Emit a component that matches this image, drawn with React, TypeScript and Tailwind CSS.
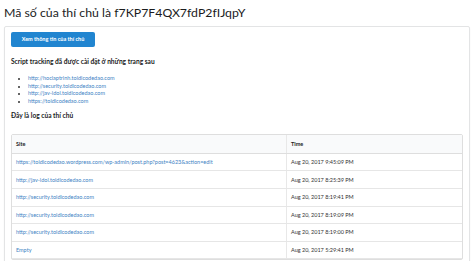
import React from "react";

const sites = [
  "http://hoclaptrinh.toidicodedao.com",
  "http://security.toidicodedao.com",
  "http://jav-idol.toidicodedao.com",
  "https://toidicodedao.com",
];

const logs = [
  { site: "https://toidicodedao.wordpress.com/wp-admin/post.php?post=4623&action=edit", time: "Aug 20, 2017 9:45:09 PM" },
  { site: "http://jav-idol.toidicodedao.com", time: "Aug 20, 2017 8:25:39 PM" },
  { site: "http://security.toidicodedao.com", time: "Aug 20, 2017 8:19:41 PM" },
  { site: "http://security.toidicodedao.com", time: "Aug 20, 2017 8:19:09 PM" },
  { site: "http://security.toidicodedao.com", time: "Aug 20, 2017 8:19:00 PM" },
  { site: "Empty", time: "Aug 20, 2017 5:29:41 PM" },
];

export default function App() {
  return (
    <div className="w-[474px] h-[261px] overflow-hidden bg-white font-['Lato','Noto_Sans',sans-serif] text-[#222]">
      <div className="pl-[4px] pr-[4px]">
        <h1 className="mt-[5px] text-[12.3px] leading-[16px] font-normal text-[#1b1c1d]">
          Mã số của thí chủ là f7KP7F4QX7fdP2fIJqpY
        </h1>

        <div className="mt-[5px] w-[466px] border border-[#e3e4e5] rounded-[2px] shadow-[0_1px_1px_rgba(34,36,38,0.12)] pl-[6px] pr-[6px] pt-[5px] pb-[4px]">
          <button className="block w-[84px] h-[15px] rounded-[2px] bg-[#2185d0] text-white text-[5.5px] font-bold leading-none">
            Xem thông tin của thí chủ
          </button>

          <h3 className="mt-[10px] text-[6.6px] leading-[9px] font-bold text-[#1b1c1d]">
            Script tracking đã được cài đặt ở những trang sau
          </h3>
          <ul className="mt-[9px] pl-[17px] list-disc text-[5.5px] leading-[7.7px] text-[#4183c4] marker:text-[#333]">
            {sites.map((s, i) => (
              <li key={i}>{s}</li>
            ))}
          </ul>

          <h3 className="mt-[5.5px] text-[6.6px] leading-[9px] font-bold text-[#1b1c1d]">
            Đây là log của thí chủ
          </h3>

          <div className="mt-[13.5px] w-[452px] border border-[#dedede] rounded-[2px] text-[5.5px]">
            <div className="grid grid-cols-[274px_1fr] h-[19px] box-border bg-[#f9fafb] border-b border-[#dedede] font-bold">
              <div className="flex items-center pl-[4px]">Site</div>
              <div className="flex items-center pl-[4px] border-l border-[#e8e8e8]">Time</div>
            </div>
            {logs.map((l, i) => (
              <div key={i} className="grid grid-cols-[274px_1fr] h-[17.6px] box-border border-b border-[#e6e6e6]">
                <div className="flex items-center pl-[4px] text-[#4183c4] whitespace-nowrap">{l.site}</div>
                <div className="flex items-center pl-[4px] text-[#333] border-l border-[#e8e8e8]">{l.time}</div>
              </div>
            ))}
          </div>
        </div>
      </div>
    </div>
  );
}
